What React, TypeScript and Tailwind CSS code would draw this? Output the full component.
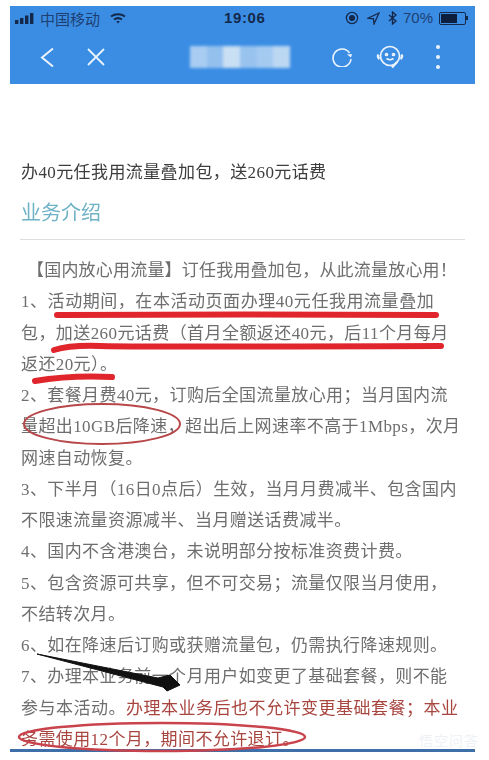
import React from "react";

const F = '"Liberation Serif","Noto Sans CJK SC",serif';

const body: { t: React.ReactNode; cls: string }[] = [
  { t: "【国内放心用流量】订任我用叠加包，从此流量放心用！", cls: "pl-[6px] tracking-[0.2px]" },
  { t: "1、活动期间，在本活动页面办理40元任我用流量叠加", cls: "tracking-[0.55px]" },
  { t: "包，加送260元话费（首月全额返还40元，后11个月每月", cls: "tracking-[0.42px]" },
  { t: "返还20元）。", cls: "tracking-[0.4px]" },
  { t: "2、套餐月费40元，订购后全国流量放心用；当月国内流", cls: "tracking-[0.4px]" },
  { t: "量超出10GB后降速，超出后上网速率不高于1Mbps，次月", cls: "tracking-[0.4px]" },
  { t: "网速自动恢复。", cls: "tracking-[0.4px]" },
  { t: "3、下半月（16日0点后）生效，当月月费减半、包含国内", cls: "tracking-[0.4px]" },
  { t: "不限速流量资源减半、当月赠送话费减半。", cls: "tracking-[0.4px]" },
  { t: "4、国内不含港澳台，未说明部分按标准资费计费。", cls: "tracking-[0.4px]" },
  { t: "5、包含资源可共享，但不可交易；流量仅限当月使用，", cls: "tracking-[0.4px]" },
  { t: "不结转次月。", cls: "tracking-[0.4px]" },
  { t: "6、如在降速后订购或获赠流量包，仍需执行降速规则。", cls: "tracking-[0.4px]" },
  { t: "7、办理本业务前一个月用户如变更了基础套餐，则不能", cls: "tracking-[0.4px]" },
  {
    t: (
      <>
        参与本活动。<span className="text-[#a8453f]">办理本业务后也不允许变更基础套餐；本业</span>
      </>
    ),
    cls: "tracking-[0.5px]",
  },
  { t: <span className="text-[#a8453f]">务需使用12个月，期间不允许退订。</span>, cls: "tracking-[0.4px]" },
];

export default function App() {
  return (
    <div className="relative h-[760px] w-[489px] overflow-hidden bg-white" style={{ fontFamily: F }}>
      <div className="ml-[10px] w-[465px] pt-[6px]">
        <header className="h-[78px] bg-[#3b8de4] text-white">
          <div className="flex h-[24px] items-center pl-[5px] pr-[7px] text-[#1d3f72]">
            <div className="flex items-center gap-[5px]">
              <svg width="20" height="11" viewBox="0 0 20 11">
                <rect x="0" y="7" width="3.4" height="4" fill="#14284a" />
                <rect x="5" y="5" width="3.4" height="6" fill="#14284a" />
                <rect x="10" y="2.5" width="3.4" height="8.5" fill="#14284a" />
                <rect x="15" y="0" width="3.4" height="11" fill="#14284a" />
              </svg>
              <span className="text-[15px] leading-none" style={{ fontFamily: '"Noto Sans CJK SC",sans-serif' }}>
                中国移动
              </span>
              <svg className="ml-[5px]" width="16" height="11" viewBox="0 0 16 11" fill="none" stroke="#14284a" strokeWidth="2">
                <path d="M1 3.5C5 .5 11 .5 15 3.5" />
                <path d="M4 6.5C6.5 4.8 9.5 4.8 12 6.5" />
                <path d="M8 10.5 6.2 8.6Q8 7.6 9.8 8.6Z" fill="#14284a" stroke="none" />
              </svg>
            </div>
            <span className="ml-[98px] text-[15px] font-bold tracking-[0.6px] text-[#14284a]" style={{ fontFamily: '"Liberation Sans",sans-serif' }}>
              19:06
            </span>
            <div className="ml-auto flex items-center gap-[8px]">
              <svg width="14" height="14" viewBox="0 0 14 14" fill="none" stroke="#14284a" strokeWidth="1.3">
                <circle cx="7" cy="7" r="5.6" />
                <circle cx="7" cy="7" r="2.4" fill="#14284a" />
              </svg>
              <svg width="13" height="13" viewBox="0 0 13 13" fill="none" stroke="#14284a" strokeWidth="1.3">
                <path d="M12 1 1 6.2 6.5 6.8 7 12Z" />
              </svg>
              <svg width="9" height="14" viewBox="0 0 9 14" fill="none" stroke="#14284a" strokeWidth="1.4">
                <path d="M1 4 8 10 4.5 13V1L8 4 1 10" />
              </svg>
              <span className="ml-[-2px] text-[15px] text-[#1d3f72]" style={{ fontFamily: '"Liberation Sans",sans-serif' }}>
                70%
              </span>
              <div className="ml-[-2px] flex items-center">
                <div className="h-[13px] w-[27px] rounded-[2px] border border-[#14284a] p-[1px]">
                  <div className="h-full w-[70%] bg-[#0d1f3d]" />
                </div>
                <div className="h-[4px] w-[2px] bg-[#14284a]" />
              </div>
            </div>
          </div>
          <div className="flex h-[54px] items-center">
            <div className="ml-[30px] flex w-[47px]">
              <svg width="15" height="21" viewBox="0 0 15 21" fill="none" stroke="#eaf3fd" strokeWidth="2">
                <path d="M13 1.5 2 10.5 13 19.5" />
              </svg>
            </div>
            <svg width="18" height="18" viewBox="0 0 18 18" fill="none" stroke="#eaf3fd" strokeWidth="1.8">
              <path d="M1 1 17 17M17 1 1 17" />
            </svg>
            <div className="ml-[85px] flex h-[22px] w-[100px] blur-[1.5px]">
              <div className="h-full flex-1 bg-[#a9cdf2]" />
              <div className="h-full flex-1 bg-[#94c0ee]" />
              <div className="h-full flex-1 bg-[#c9dff3]" />
              <div className="h-full flex-1 bg-[#99c3ef]" />
              <div className="h-full flex-1 bg-[#a5caf1]" />
              <div className="h-full flex-1 bg-[#bcd7f2]" />
            </div>
            <div className="ml-[41px] flex w-[45px]">
              <svg width="22" height="20" viewBox="0 0 22 20" fill="none" stroke="#eaf3fd" strokeWidth="1.6">
                <path d="M18.5 6A9 9 0 1 0 20 12" />
                <path d="M16 7.5 21 7 20 10.5Z" fill="#eaf3fd" stroke="none" />
              </svg>
            </div>
            <svg width="28" height="24" viewBox="0 0 28 24" fill="none" stroke="#eaf3fd" strokeWidth="1.7">
              <circle cx="14" cy="11" r="9.5" />
              <path d="M2.5 9.5Q1 12 3.5 14M25.5 9.5Q27 12 24.5 14M21 17 16 22.5" strokeWidth="2.4" />
              <circle cx="10.5" cy="9.5" r="1" />
              <circle cx="17.5" cy="9.5" r="1" />
              <path d="M10.5 13.5Q14 16 17.5 13.5" />
            </svg>
            <div className="ml-[32px] flex flex-col gap-[6px]">
              <span className="h-[4px] w-[4px] rounded-full bg-[#eaf3fd]" />
              <span className="h-[4px] w-[4px] rounded-full bg-[#eaf3fd]" />
              <span className="h-[4px] w-[4px] rounded-full bg-[#eaf3fd]" />
            </div>
          </div>
        </header>
        <main className="pl-[11px] blur-[0.4px]">
          <h1 className="mt-[77px] text-[17px] leading-[24px] tracking-[0.4px] text-[#3d3d3d]">办40元任我用流量叠加包，送260元话费</h1>
          <h2 className="mt-[15px] text-[20px] leading-[26px] text-[#6fb2c6]">业务介绍</h2>
          <div className="ml-[-1px] mt-[13px] h-[1px] w-[445px] bg-[#ddd]" />
          <div className="mt-[15px] text-[17px] leading-[31.25px] text-[#6e6e6e]">
            {body.map((l, i) => (
              <div key={i} className={`whitespace-nowrap ${l.cls}`}>
                {l.t}
              </div>
            ))}
          </div>
        </main>
      </div>
      <div className="absolute bottom-[8px] left-[10px] h-[3px] w-[465px] bg-[#3f6fa8]" />
      <div className="absolute bottom-[10px] right-[10px] text-[14px] leading-[20px] tracking-[1px] text-[#eef2f5]" style={{ fontFamily: '"Noto Sans CJK SC",sans-serif' }}>
        悟空问答
      </div>
      <svg className="absolute left-0 top-0" width="489" height="760" viewBox="0 0 489 760" fill="none">
        <path d="M57 315Q240 314 436 315" stroke="#e0252c" strokeWidth="6" strokeLinecap="round" />
        <path d="M54 350Q70 345 100 346T441 346" stroke="#e0252c" strokeWidth="6" strokeLinecap="round" />
        <path d="M35 381Q70 375 112 377" stroke="#e0252c" strokeWidth="6" strokeLinecap="round" />
        <ellipse cx="102" cy="424" rx="78" ry="20" stroke="#b8474a" strokeWidth="2" />
        <ellipse cx="162" cy="737" rx="143" ry="14" stroke="#c9434c" strokeWidth="2.5" />
        <path d="M37 654 158 678 170 675 180 685 167 691 163 687Z" fill="#111" stroke="#111" strokeWidth="1" />
      </svg>
    </div>
  );
}
